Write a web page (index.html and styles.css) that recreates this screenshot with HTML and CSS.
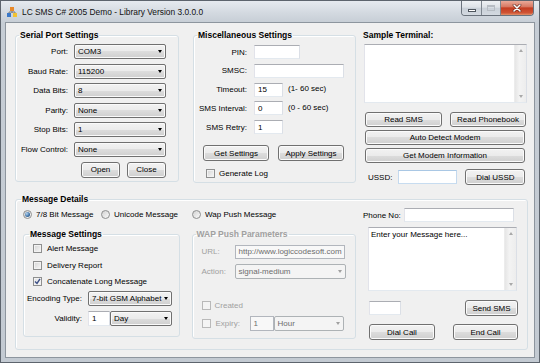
FILE: index.html
```html
<!DOCTYPE html>
<html lang="en">
<head>
    <title>LC SMS C# 2005 Demo</title>
    <link rel="stylesheet" href="styles.css">
</head>
<body>
<div class="window">
    <div class="titlebar">
        <svg class="app-icon" width="10" height="10" viewBox="0 0 10 10">
            <path d="M5 4 V6 M2 6 V5 H8 V6" stroke="#7a7a7a" fill="none"/>
            <rect x="3" y="0" width="4" height="4" fill="#e8892a"/>
            <rect x="0" y="6" width="4" height="4" fill="#3a78c8"/>
            <rect x="6" y="6" width="4" height="4" fill="#f2c232"/>
        </svg>
        <span class="caption">LC SMS C# 2005 Demo - Library Version 3.0.0.0</span>
        <div class="caption-buttons">
            <span class="cap-btn min"><i></i></span>
            <span class="cap-btn max"><i></i></span>
            <span class="cap-btn close">
                <svg width="10" height="8" viewBox="0 0 10 8">
                    <path d="M2 1 L8 7 M8 1 L2 7" stroke="#5a1a10" stroke-width="2.6" stroke-linecap="round"/>
                    <path d="M2 1 L8 7 M8 1 L2 7" stroke="#fff" stroke-width="1.6" stroke-linecap="round"/>
                </svg>
            </span>
        </div>
    </div>

    <div class="client">
        <div class="top-row">
            <fieldset class="group serial">
                <legend>Serial Port Settings</legend>
                <div class="form-row"><label>Port:</label><div class="combo w92"><span>COM3</span><i class="arrow"></i></div></div>
                <div class="form-row"><label>Baud Rate:</label><div class="combo w92"><span>115200</span><i class="arrow"></i></div></div>
                <div class="form-row"><label>Data Bits:</label><div class="combo w92"><span>8</span><i class="arrow"></i></div></div>
                <div class="form-row"><label>Parity:</label><div class="combo w92"><span>None</span><i class="arrow"></i></div></div>
                <div class="form-row"><label>Stop Bits:</label><div class="combo w92"><span>1</span><i class="arrow"></i></div></div>
                <div class="form-row"><label>Flow Control:</label><div class="combo w92"><span>None</span><i class="arrow"></i></div></div>
                <div class="btn-row">
                    <button class="btn open">Open</button>
                    <button class="btn close-port">Close</button>
                </div>
            </fieldset>

            <fieldset class="group misc">
                <legend>Miscellaneous Settings</legend>
                <div class="form-row"><label>PIN:</label><div class="field pin"></div></div>
                <div class="form-row"><label>SMSC:</label><div class="field smsc"></div></div>
                <div class="form-row"><label>Timeout:</label><div class="field short">15</div><span class="hint">(1- 60 sec)</span></div>
                <div class="form-row"><label>SMS Interval:</label><div class="field short">0</div><span class="hint">(0 - 60 sec)</span></div>
                <div class="form-row"><label>SMS Retry:</label><div class="field short">1</div></div>
                <div class="btn-row">
                    <button class="btn w66">Get Settings</button>
                    <button class="btn w66">Apply Settings</button>
                </div>
                <div class="check-row"><span class="check"></span><span>Generate Log</span></div>
            </fieldset>

            <div class="terminal">
                <div class="heading">Sample Terminal:</div>
                <div class="memo term-memo">
                    <div class="memo-text"></div>
                    <div class="vscroll"><i class="up"></i><i class="down"></i></div>
                </div>
                <div class="term-btns">
                    <button class="btn read-sms">Read SMS</button>
                    <button class="btn read-book">Read Phonebook</button>
                </div>
                <button class="btn wide">Auto Detect Modem</button>
                <button class="btn wide">Get Modem Information</button>
                <div class="ussd-row">
                    <label>USSD:</label>
                    <div class="field ussd"></div>
                    <button class="btn dial-ussd">Dial USSD</button>
                </div>
            </div>
        </div>

        <fieldset class="group details">
            <legend>Message Details</legend>
            <div class="md-body">
                <div class="md-left">
                    <div class="radio-row">
                        <div class="radio-item r1"><span class="radio on"></span><span>7/8 Bit Message</span></div>
                        <div class="radio-item r2"><span class="radio"></span><span>Unicode Message</span></div>
                        <div class="radio-item"><span class="radio"></span><span>Wap Push Message</span></div>
                    </div>
                    <div class="sub-row">
                        <fieldset class="group settings">
                            <legend>Message Settings</legend>
                            <div class="check-row"><span class="check"></span><span>Alert Message</span></div>
                            <div class="check-row"><span class="check"></span><span>Delivery Report</span></div>
                            <div class="check-row"><span class="check checked"><svg width="7" height="7" viewBox="0 0 7 7"><path d="M1 3.5 L3 5.5 L6 0.8" stroke="#3c4f86" stroke-width="1.4" fill="none"/></svg></span><span>Concatenate Long Message</span></div>
                            <div class="form-row"><label>Encoding Type:</label><div class="combo enc"><span>7-bit GSM Alphabet</span><i class="arrow"></i></div></div>
                            <div class="form-row"><label>Validity:</label><div class="field validity">1</div><div class="combo day"><span>Day</span><i class="arrow"></i></div></div>
                        </fieldset>

                        <fieldset class="group wap disabled">
                            <legend>WAP Push Parameters</legend>
                            <div class="form-row"><label>URL:</label><div class="field url">http://www.logiccodesoft.com</div></div>
                            <div class="form-row"><label>Action:</label><div class="combo action"><span>signal-medium</span><i class="arrow"></i></div></div>
                            <div class="check-row created"><span class="check"></span><span>Created</span></div>
                            <div class="form-row expiry"><span class="check"></span><span class="expiry-label">Expiry:</span><div class="field expiry-num">1</div><div class="combo hour"><span>Hour</span><i class="arrow"></i></div></div>
                        </fieldset>
                    </div>
                </div>

                <div class="compose">
                    <div class="phone-row"><label>Phone No:</label><div class="field phone"></div></div>
                    <div class="memo msg-memo">
                        <div class="memo-text">Enter your Message here...</div>
                        <div class="vscroll"><i class="up"></i><i class="down"></i></div>
                    </div>
                    <div class="send-row">
                        <div class="field count"></div>
                        <button class="btn send">Send SMS</button>
                    </div>
                    <div class="call-row">
                        <button class="btn dial">Dial Call</button>
                        <button class="btn end">End Call</button>
                    </div>
                </div>
            </div>
        </fieldset>
    </div>
</div>
</body>
</html>
```

FILE: styles.css
```css
* {
box-sizing: border-box;
}

body {
margin: 0;
font-family: "Liberation Sans", Arial, sans-serif;
font-size: 8px;
color: #000;
background: #fff;
}

.window {
width: 540px;
height: 363px;
border: 1px solid #5d646d;
padding: 0 4px 4px;
background: linear-gradient(#e6eaef 0, #d3d9e0 12px, #c6cdd5 22px, #c3cad2 100%);
display: flex;
flex-direction: column;
}

/* title bar */
.titlebar {
height: 21px;
display: flex;
align-items: center;
}

.app-icon {
margin-left: 2px;
}

.caption {
margin-left: 5px;
font-size: 8.4px;
color: #101010;
}

.caption-buttons {
align-self: flex-start;
margin-left: auto;
margin-right: 1px;
display: flex;
height: 15px;
border: 1px solid #6a727c;
border-top: none;
border-radius: 0 0 4px 4px;
overflow: hidden;
}

.cap-btn {
display: flex;
align-items: center;
justify-content: center;
height: 100%;
background: linear-gradient(#eef1f4, #dde2e7 45%, #c9d0d8 50%, #d3d9e0);
}

.cap-btn.min {
width: 20px;
border-right: 1px solid #7e868f;
}

.cap-btn.min i {
width: 8px;
height: 3px;
margin-top: 4px;
background: #fff;
border: 1px solid #4e555d;
}

.cap-btn.max {
width: 19px;
border-right: 1px solid #7e868f;
}

.cap-btn.max i {
width: 8px;
height: 6px;
border: 1px solid #b6bcc3;
border-top-width: 2px;
}

.cap-btn.close {
width: 32px;
background: linear-gradient(#eaa999, #d87a64 40%, #c43d22 50%, #cf5435 85%, #e1946d);
}

/* client area */
.client {
flex: 1;
background: #f0f0f0;
border: 1px solid #8d959e;
padding: 7px 0 0 9px;
}

.top-row {
display: flex;
align-items: flex-start;
}

.group {
margin: 0;
padding: 0;
min-width: 0;
border: 1px solid #d5dfe5;
border-radius: 3px;
box-shadow: inset 1px 1px 0 #fff;
}

legend {
font-weight: bold;
font-size: 8.5px;
line-height: 10px;
padding: 0 1px;
margin-left: 3px;
}

.form-row {
display: flex;
align-items: center;
height: 15px;
}

.form-row label {
text-align: right;
}

.check-row {
display: flex;
align-items: center;
height: 10px;
}

.check {
width: 9px;
height: 9px;
margin-right: 4px;
border: 1px solid #8e8f8f;
background: linear-gradient(135deg, #d4d4d4, #f8f8f8);
box-shadow: inset 0 0 0 1px #f2f2f2;
display: flex;
align-items: center;
justify-content: center;
}

.check.checked {
background: linear-gradient(135deg, #dcdcdc, #fbfbfb);
}

.radio {
width: 9px;
height: 9px;
margin-right: 4px;
border: 1px solid #8e8f8f;
border-radius: 50%;
background: linear-gradient(135deg, #d2d2d2, #fafafa);
display: flex;
align-items: center;
justify-content: center;
}

.radio.on::after {
content: "";
width: 5px;
height: 5px;
border-radius: 50%;
background: radial-gradient(circle at 35% 35%, #b5d4f0, #3b6fa3 60%, #24496f);
}

/* controls */
.btn {
font: inherit;
color: #000;
height: 16px;
padding: 0;
border: 1px solid #707070;
border-radius: 3px;
background: linear-gradient(#f2f2f2 0%, #ebebeb 50%, #dddddd 50%, #cfcfcf 100%);
box-shadow: inset 0 0 0 1px #fbfbfb;
}

.combo {
height: 15px;
display: flex;
align-items: center;
justify-content: space-between;
padding: 0 3px;
border: 1px solid #707070;
border-radius: 2px;
background: linear-gradient(#f2f2f2 0%, #ebebeb 50%, #dddddd 50%, #cfcfcf 100%);
box-shadow: inset 0 0 0 1px #fafafa;
}

.arrow {
width: 0;
height: 0;
border-left: 2.5px solid transparent;
border-right: 2.5px solid transparent;
border-top: 3px solid #000;
}

.field {
height: 14px;
display: flex;
align-items: center;
padding-left: 3px;
background: #fff;
border: 1px solid;
border-color: #abadb3 #dbdfe6 #e3e9ef #e2e3ea;
}

.w92 { width: 92px; }
.w66 { width: 66px; }

/* serial port */
.serial {
width: 164px;
height: 152px;
}

.serial .form-row {
margin-top: 4.6px;
}

.serial .form-row:first-of-type {
margin-top: 4px;
}

.serial label {
width: 52px;
margin-right: 6px;
}

.serial .btn-row {
display: flex;
justify-content: flex-end;
margin: 5px 12px 0 0;
}

.serial .btn {
width: 39px;
margin-left: 7px;
}

/* miscellaneous */
.misc {
width: 163px;
height: 153px;
margin-left: 14px;
}

.misc .form-row {
height: 14px;
margin-top: 4.75px;
}

.misc .form-row:first-of-type {
margin-top: 5px;
}

.misc label {
width: 53px;
margin-right: 7px;
}

.field.pin { width: 46px; }
.field.smsc { width: 90px; }
.field.short { width: 29px; }

.hint {
margin-left: 5px;
margin-top: -2px;
}

.misc .btn-row {
display: flex;
margin: 11px 0 0 9px;
}

.misc .btn-row .btn + .btn {
margin-left: 9px;
}

.misc .check-row {
margin: 7px 0 0 12px;
}

/* terminal */
.terminal {
width: 164px;
margin-left: 7px;
}

.heading {
font-weight: bold;
font-size: 8.5px;
line-height: 10px;
}

.memo {
display: flex;
background: #fff;
border: 1px solid;
border-color: #abadb3 #dbdfe6 #e3e9ef #e2e3ea;
}

.memo-text {
flex: 1;
padding: 2px 2px;
}

.vscroll {
width: 12px;
display: flex;
flex-direction: column;
justify-content: space-between;
align-items: center;
padding: 4px 0;
background: linear-gradient(to right, #e6e6e6, #f3f3f3 40%, #ededed);
border-left: 1px solid #ececec;
}

.vscroll i {
width: 0;
height: 0;
border-left: 2.5px solid transparent;
border-right: 2.5px solid transparent;
}

.vscroll .up {
border-bottom: 3px solid #a9a9a9;
}

.vscroll .down {
border-top: 3px solid #a9a9a9;
}

.term-memo {
width: 163px;
height: 59px;
margin: 4px 0 0 1px;
}

.term-btns {
display: flex;
margin: 9px 0 0 2px;
}

.terminal .btn {
height: 15px;
}

.btn.read-sms { width: 77px; }
.btn.read-book { width: 76px; margin-left: 8px; }

.btn.wide {
display: block;
width: 160px;
margin: 3px 0 0 2px;
}

.ussd-row {
display: flex;
align-items: center;
height: 16px;
margin-top: 6px;
}

.ussd-row label {
margin-left: 5px;
}

.field.ussd {
width: 59px;
margin-left: 6px;
border-color: #a9c7e4 #c4d9ee #c7dcf0 #c4d9ee;
}

.terminal .btn.dial-ussd {
width: 60px;
height: 16px;
margin-left: 8px;
}

/* message details */
.details {
width: 513px;
height: 156px;
margin-top: 9px;
}

.details > legend {
margin-left: 5px;
}

.md-body {
display: flex;
}

.md-left {
width: 340px;
padding-left: 7px;
}

.radio-row {
display: flex;
align-items: center;
height: 10px;
margin-top: 5.5px;
}

.radio-item {
display: flex;
align-items: center;
}

.radio-item.r1 { width: 78px; }
.radio-item.r2 { width: 91px; }

.sub-row {
display: flex;
align-items: flex-start;
margin-top: 9.5px;
}

.settings {
width: 157px;
height: 108px;
}

.settings > legend {
margin-left: 5px;
}

.settings .check-row {
padding-left: 9px;
margin-top: 6.5px;
}

.settings .check-row:first-of-type {
margin-top: 4.5px;
}

.settings .check-row .check {
margin-right: 5px;
}

.settings .form-row {
margin-top: 4.5px;
}

.settings .form-row:first-of-type {
margin-top: 11.5px;
}

.settings label {
width: 58px;
margin-right: 6px;
}

.combo.enc { width: 84px; }
.field.validity { width: 22px; height: 15px; }
.combo.day { width: 62px; }

/* wap push */
.wap {
width: 165px;
height: 110px;
margin-left: 12px;
}

.disabled,
.disabled legend {
color: #a0a0a0;
}

.disabled .field {
color: #6d6d6d;
background: #f8f8f8;
border-color: #b2b6bd;
}

.disabled .combo {
color: #6d6d6d;
background: #f4f4f4;
border-color: #adb2b5;
box-shadow: none;
}

.disabled .arrow {
border-top-color: #a0a0a0;
}

.disabled .check {
border-color: #b9b9b9;
background: #f4f4f4;
box-shadow: none;
}

.wap .form-row {
margin-top: 5px;
}

.wap label {
width: 42px;
padding-left: 9px;
text-align: left;
}

.field.url { width: 110px; }
.combo.action { width: 111px; }

.wap .check-row.created {
padding-left: 9px;
margin-top: 21.5px;
}

.wap .form-row.expiry {
padding-left: 9px;
margin-top: 5.5px;
}

.expiry-label {
width: 34px;
margin-left: 1px;
}

.field.expiry-num { width: 24px; height: 15px; }
.combo.hour { width: 70px; }

/* compose */
.compose {
width: 155px;
margin-left: 7px;
}

.phone-row {
display: flex;
align-items: center;
height: 14px;
margin-top: 4px;
}

.phone-row label {
width: 41px;
}

.field.phone { width: 110px; }

.msg-memo {
width: 149px;
height: 64px;
margin: 5px 0 0 5px;
}

.send-row,
.call-row {
display: flex;
align-items: center;
height: 16px;
}

.send-row {
margin-top: 9px;
}

.call-row {
margin-top: 8px;
}

.field.count {
width: 32px;
margin-left: 6px;
}

.btn.send {
width: 53px;
margin-left: auto;
}

.btn.dial {
width: 66px;
margin-left: 6px;
}

.btn.end {
width: 65px;
margin-left: auto;
}
```
